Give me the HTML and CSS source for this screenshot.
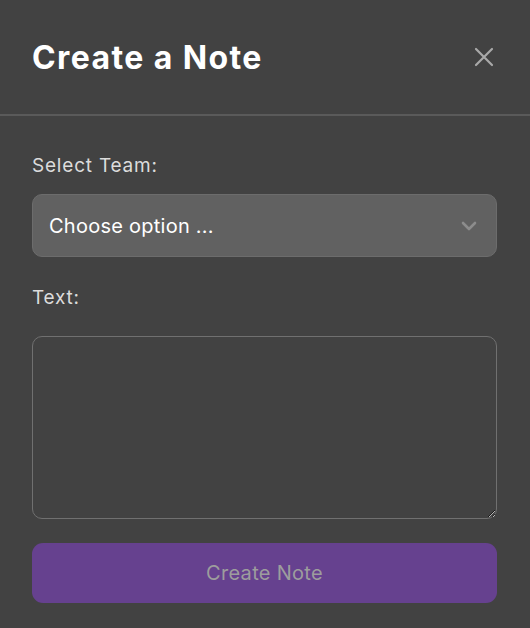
FILE: index.html
```html
<!DOCTYPE html>
<html lang="en">
<head>
<meta charset="utf-8">
<title>Create a Note</title>
<link rel="stylesheet" href="styles.css">
</head>
<body>
<div class="modal">
  <header class="modal-header">
    <h1 class="modal-title">Create a Note</h1>
    <button class="close-btn" aria-label="Close">
      <svg width="20" height="20" viewBox="0 0 20 20"><path d="M2 2 L18 18 M18 2 L2 18" stroke="#a9a9a9" stroke-width="2.2" stroke-linecap="round" fill="none"/></svg>
    </button>
  </header>
  <form class="modal-body">
    <label class="field-label">Select Team:</label>
    <div class="select">
      <span class="select-value">Choose option ...</span>
      <svg class="chevron" width="16" height="10" viewBox="0 0 16 10"><path d="M2 2 L8 8 L14 2" stroke="#8c8c8c" stroke-width="2.6" stroke-linecap="round" stroke-linejoin="round" fill="none"/></svg>
    </div>
    <label class="field-label text-label">Text:</label>
    <textarea class="textarea"></textarea>
    <button type="button" class="submit-btn">Create Note</button>
  </form>
</div>
</body>
</html>
```
FILE: styles.css
```css
* { box-sizing: border-box; }
html, body {
  margin: 0;
  padding: 0;
  background: #424242;
  font-family: Inter, "Noto Sans", sans-serif;
  height: 100%;
}
.modal {
  width: 530px;
  min-height: 628px;
  background: #424242;
}
.modal-header {
  display: flex;
  align-items: center;
  justify-content: space-between;
  height: 116px;
  padding: 0 36px 0 32px;
  border-bottom: 2px solid #5a5a5a;
}
.modal-title {
  margin: 0;
  font-size: 32px;
  font-weight: 700;
  color: #ffffff;
  letter-spacing: 1.4px;
}
.close-btn {
  background: none;
  border: none;
  padding: 0;
  width: 20px;
  height: 20px;
  display: flex;
  cursor: pointer;
}
.modal-body {
  display: flex;
  flex-direction: column;
  padding: 39px 33px 0 32px;
}
.field-label {
  font-size: 19px;
  color: #dcdcdc;
  line-height: 22px;
  letter-spacing: 0.8px;
}
.select {
  margin-top: 17px;
  height: 63px;
  background: #616161;
  border: 1px solid #6c6c6c;
  border-radius: 10px;
  display: flex;
  align-items: center;
  justify-content: space-between;
  padding: 0 19px 0 16px;
}
.select-value {
  font-size: 20px;
  color: #ffffff;
  letter-spacing: 0.25px;
}
.text-label {
  margin-top: 30px;
}
.textarea {
  margin-top: 27px;
  height: 183px;
  background: transparent;
  border: 1.5px solid #707070;
  border-radius: 10px;
  resize: vertical;
  font-family: inherit;
}
.submit-btn {
  margin-top: 24px;
  height: 60px;
  background: #66418f;
  border: none;
  border-radius: 11px;
  color: #9d9d9d;
  font-family: inherit;
  font-size: 20px;
  letter-spacing: 0.3px;
}
```
